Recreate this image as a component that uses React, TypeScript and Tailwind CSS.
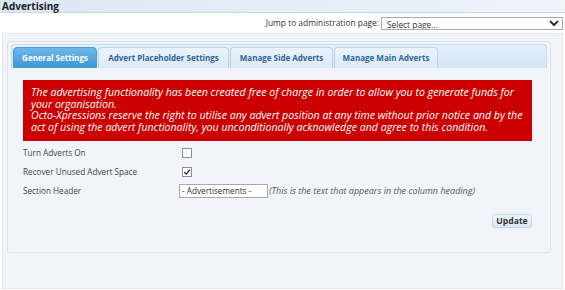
import * as React from "react";

const tabs = [
  { label: "General Settings", w: "w-[84px]" },
  { label: "Advert Placeholder Settings", w: "w-[131px]" },
  { label: "Manage Side Adverts", w: "w-[103px]" },
  { label: "Manage Main Adverts", w: "w-[104px]" },
];

function Check({ checked, onChange }: { checked: boolean; onChange: (v: boolean) => void }) {
  return (
    <button
      onClick={() => onChange(!checked)}
      className="ml-[3px] flex h-[10px] w-[10px] items-center justify-center border border-[#8f8f8f] bg-white"
    >
      {checked && (
        <svg viewBox="0 0 10 10" className="h-[8px] w-[8px]">
          <path d="M1.5 5.2 L4 7.6 L8.6 2" fill="none" stroke="#222" strokeWidth="1.6" />
        </svg>
      )}
    </button>
  );
}

export default function App() {
  const [active, setActive] = React.useState(0);
  const [advertsOn, setAdvertsOn] = React.useState(false);
  const [recover, setRecover] = React.useState(true);
  const [header, setHeader] = React.useState("- Advertisements -");

  return (
    <div className="h-[290px] w-[565px] overflow-hidden bg-white text-[#333] font-['Open_Sans',sans-serif]">
      <div className="h-[13px] border-b border-[#c9dbec] bg-gradient-to-r from-[#dbe7f3] to-[#eef4fa] pl-[2px] text-[10px] font-bold leading-[12px] text-[#222]">
        Advertising
      </div>

      <div className="flex h-[20px] items-center justify-end gap-[2px] pr-[2px] text-[8.4px]">
        <span>Jump to administration page:</span>
        <select className="h-[13px] w-[182px] border border-[#a9a9a9] bg-white px-[1px] text-[8.4px] leading-[11px] text-[#333]">
          <option>Select page...</option>
        </select>
      </div>

      <div className="mx-[2px] h-[256px] border border-[#e1e7ee] bg-[#f1f4f8] px-[4px] pt-[7px]">
        <div className="h-[212px] w-[544px] rounded-[3px] border border-[#dce3ea] bg-[#f1f4f8] px-[3px] pt-[2px]">
          <div className="flex h-[24px] items-end rounded-t-[4px] border border-b-0 border-[#c5dbef] bg-gradient-to-b from-[#e4f0fa] to-[#d4e6f6] pl-[1px]">
            {tabs.map((t, i) => (
              <button
                key={t.label}
                onClick={() => setActive(i)}
                className={
                  i === active
                    ? `mr-[1px] h-[21px] ${t.w} rounded-t-[4px] border border-[#4a9bd6] bg-gradient-to-b from-[#6db8ea] to-[#3d98d8] text-[8px] font-bold text-white`
                    : `mr-[1px] h-[21px] ${t.w} rounded-t-[4px] border border-b-0 border-[#bcd4ea] bg-gradient-to-b from-[#eaf4fc] to-[#dceaf7] text-[8px] font-bold text-[#2e6596]`
                }
              >
                {t.label}
              </button>
            ))}
          </div>

          <div className="pl-[12px] pr-[15px] pt-[12px]">
            <div className="bg-[#cc0000] pb-[8px] pl-[8px] pr-[2px] pt-[7px] text-[10.6px] italic leading-[11.5px] text-white">
              The advertising functionality has been created free of charge in order to allow you to generate funds for
              your organisation.
              <br />
              Octo-Xpressions reserve the right to utilise any advert position at any time without prior notice and by the
              act of using the advert functionality, you unconditionally acknowledge and agree to this condition.
            </div>

            <div className="mt-[5px] grid grid-cols-[156px_1fr] gap-y-[5px] text-[8.2px] leading-[14px] text-[#444]">
              <div>Turn Adverts On</div>
              <div className="flex items-center">
                <Check checked={advertsOn} onChange={setAdvertsOn} />
              </div>
              <div>Recover Unused Advert Space</div>
              <div className="flex items-center">
                <Check checked={recover} onChange={setRecover} />
              </div>
              <div>Section Header</div>
              <div className="flex items-center gap-[1px]">
                <input
                  value={header}
                  onChange={(e) => setHeader(e.target.value)}
                  className="h-[14px] w-[89px] border border-[#a9a9a9] bg-white px-[2px] text-[8.2px] text-[#333]"
                />
                <span className="text-[9px] italic text-[#555]">(This is the text that appears in the column heading)</span>
              </div>
            </div>

            <div className="mt-[16px] flex justify-end">
              <button className="h-[14px] w-[40px] rounded-[3px] border border-[#c3d6e8] bg-gradient-to-b from-[#eef5fb] to-[#dbe8f4] text-[8.6px] font-bold leading-[12px] text-[#333]">
                Update
              </button>
            </div>
          </div>
        </div>
      </div>
    </div>
  );
}
